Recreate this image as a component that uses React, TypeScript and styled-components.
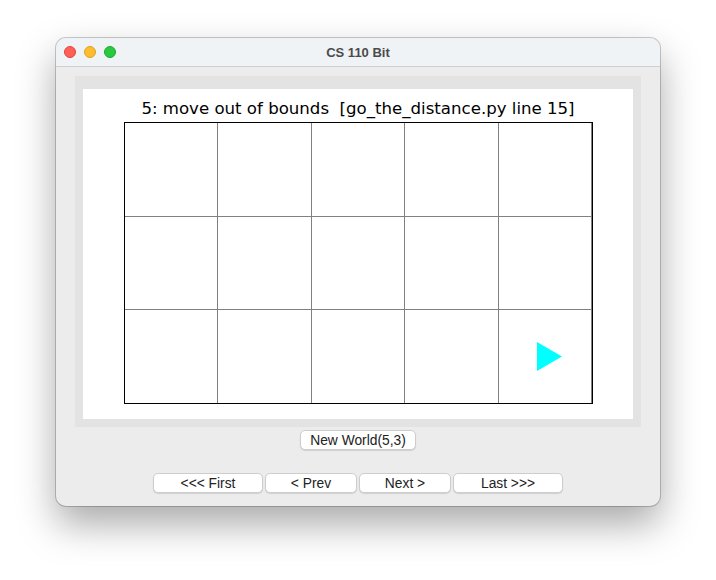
import React from 'react';
import styled, { createGlobalStyle } from 'styled-components';

const GlobalStyle = createGlobalStyle`
  html, body {
    margin: 0;
    background: #ffffff;
  }
`

const Page = styled.div`
  min-height: 100vh;
  box-sizing: border-box;
  padding: 38px 0 0 56px;
`

const Window = styled.div`
  width: 604px;
  height: 468px;
  box-sizing: border-box;
  border-radius: 10px;
  background: #ececec;
  overflow: hidden;
  box-shadow: 0 0 0 1px rgba(0, 0, 0, 0.2), 0 18px 38px rgba(0, 0, 0, 0.34);
  display: flex;
  flex-direction: column;
`

const TitleBar = styled.div`
  height: 28px;
  flex: none;
  background: #f0f3f6;
  border-bottom: 1px solid #d0d0d0;
  display: grid;
  grid-template-columns: 1fr auto 1fr;
  align-items: center;
`

const Lights = styled.div`
  display: flex;
  gap: 8px;
  padding-left: 8px;
`

const Light = styled.span<{ $fill: string; $edge: string }>`
  width: 12px;
  height: 12px;
  border-radius: 50%;
  box-sizing: border-box;
  background: ${p => p.$fill};
  border: 0.5px solid ${p => p.$edge};
`

const Title = styled.div`
  font: bold 13px "Liberation Sans", Arial, sans-serif;
  color: #4b4b4b;
`

const Body = styled.div`
  padding: 9px 19px 0;
  display: flex;
  flex-direction: column;
  align-items: center;
`

const Panel = styled.div`
  align-self: stretch;
  background: #e3e3e3;
  padding: 13px 8px 8px;
`

const Canvas = styled.div`
  height: 330px;
  background: #ffffff;
  display: flex;
  flex-direction: column;
  align-items: center;
`

const Caption = styled.div`
  font: 16.6px "DejaVu Sans", sans-serif;
  line-height: 20px;
  color: #000;
  padding-top: 10px;
  height: 23px;
  white-space: pre;
`

const Board = styled.div`
  width: 469px;
  height: 282px;
  box-sizing: border-box;
  border: 1px solid #000;
  background: #808080;
  display: grid;
  grid-template-columns: repeat(5, 1fr);
  grid-template-rows: repeat(3, 1fr);
  gap: 1px;
`

const Cell = styled.div`
  background: #ffffff;
  display: flex;
  align-items: center;
  justify-content: center;
`

const Bit = styled.svg`
  margin-left: 8px;
`

const Button = styled.button<{ $w: number }>`
  width: ${p => p.$w}px;
  height: 20px;
  padding: 0;
  background: #ffffff;
  border: 1px solid #cdcdcd;
  border-radius: 5px;
  box-shadow: 0 1px 1px rgba(0, 0, 0, 0.12);
  font: 13.8px "Liberation Sans", Arial, sans-serif;
  color: #222222;
`

const WorldButton = styled(Button)`
  margin-top: 3px;
`

const NavRow = styled.div`
  margin-top: 23px;
  display: flex;
  gap: 2px;
`

const COLS = 5
const ROWS = 3
const bit = { x: 4, y: 2 }

export default function App() {
  const cells = []
  for (let y = 0; y < ROWS; y++) {
    for (let x = 0; x < COLS; x++) {
      cells.push(
        <Cell key={`${x}-${y}`}>
          {x === bit.x && y === bit.y && (
            <Bit width="25" height="29" viewBox="0 0 25 29">
              <polygon points="0,0 25,14.5 0,29" fill="#00ffff" />
            </Bit>
          )}
        </Cell>
      )
    }
  }

  return (
    <>
      <GlobalStyle />
      <Page>
        <Window>
          <TitleBar>
            <Lights>
              <Light $fill="#fe5f57" $edge="#e0443e" />
              <Light $fill="#febc2e" $edge="#dea123" />
              <Light $fill="#28c840" $edge="#1aab29" />
            </Lights>
            <Title>CS 110 Bit</Title>
            <div />
          </TitleBar>
          <Body>
            <Panel>
              <Canvas>
                <Caption>5: move out of bounds  [go_the_distance.py line 15]</Caption>
                <Board>{cells}</Board>
              </Canvas>
            </Panel>
            <WorldButton $w={116}>New World(5,3)</WorldButton>
            <NavRow>
              <Button $w={110}>&lt;&lt;&lt; First</Button>
              <Button $w={92}>&lt; Prev</Button>
              <Button $w={92}>Next &gt;</Button>
              <Button $w={110}>Last &gt;&gt;&gt;</Button>
            </NavRow>
          </Body>
        </Window>
      </Page>
    </>
  )
}
